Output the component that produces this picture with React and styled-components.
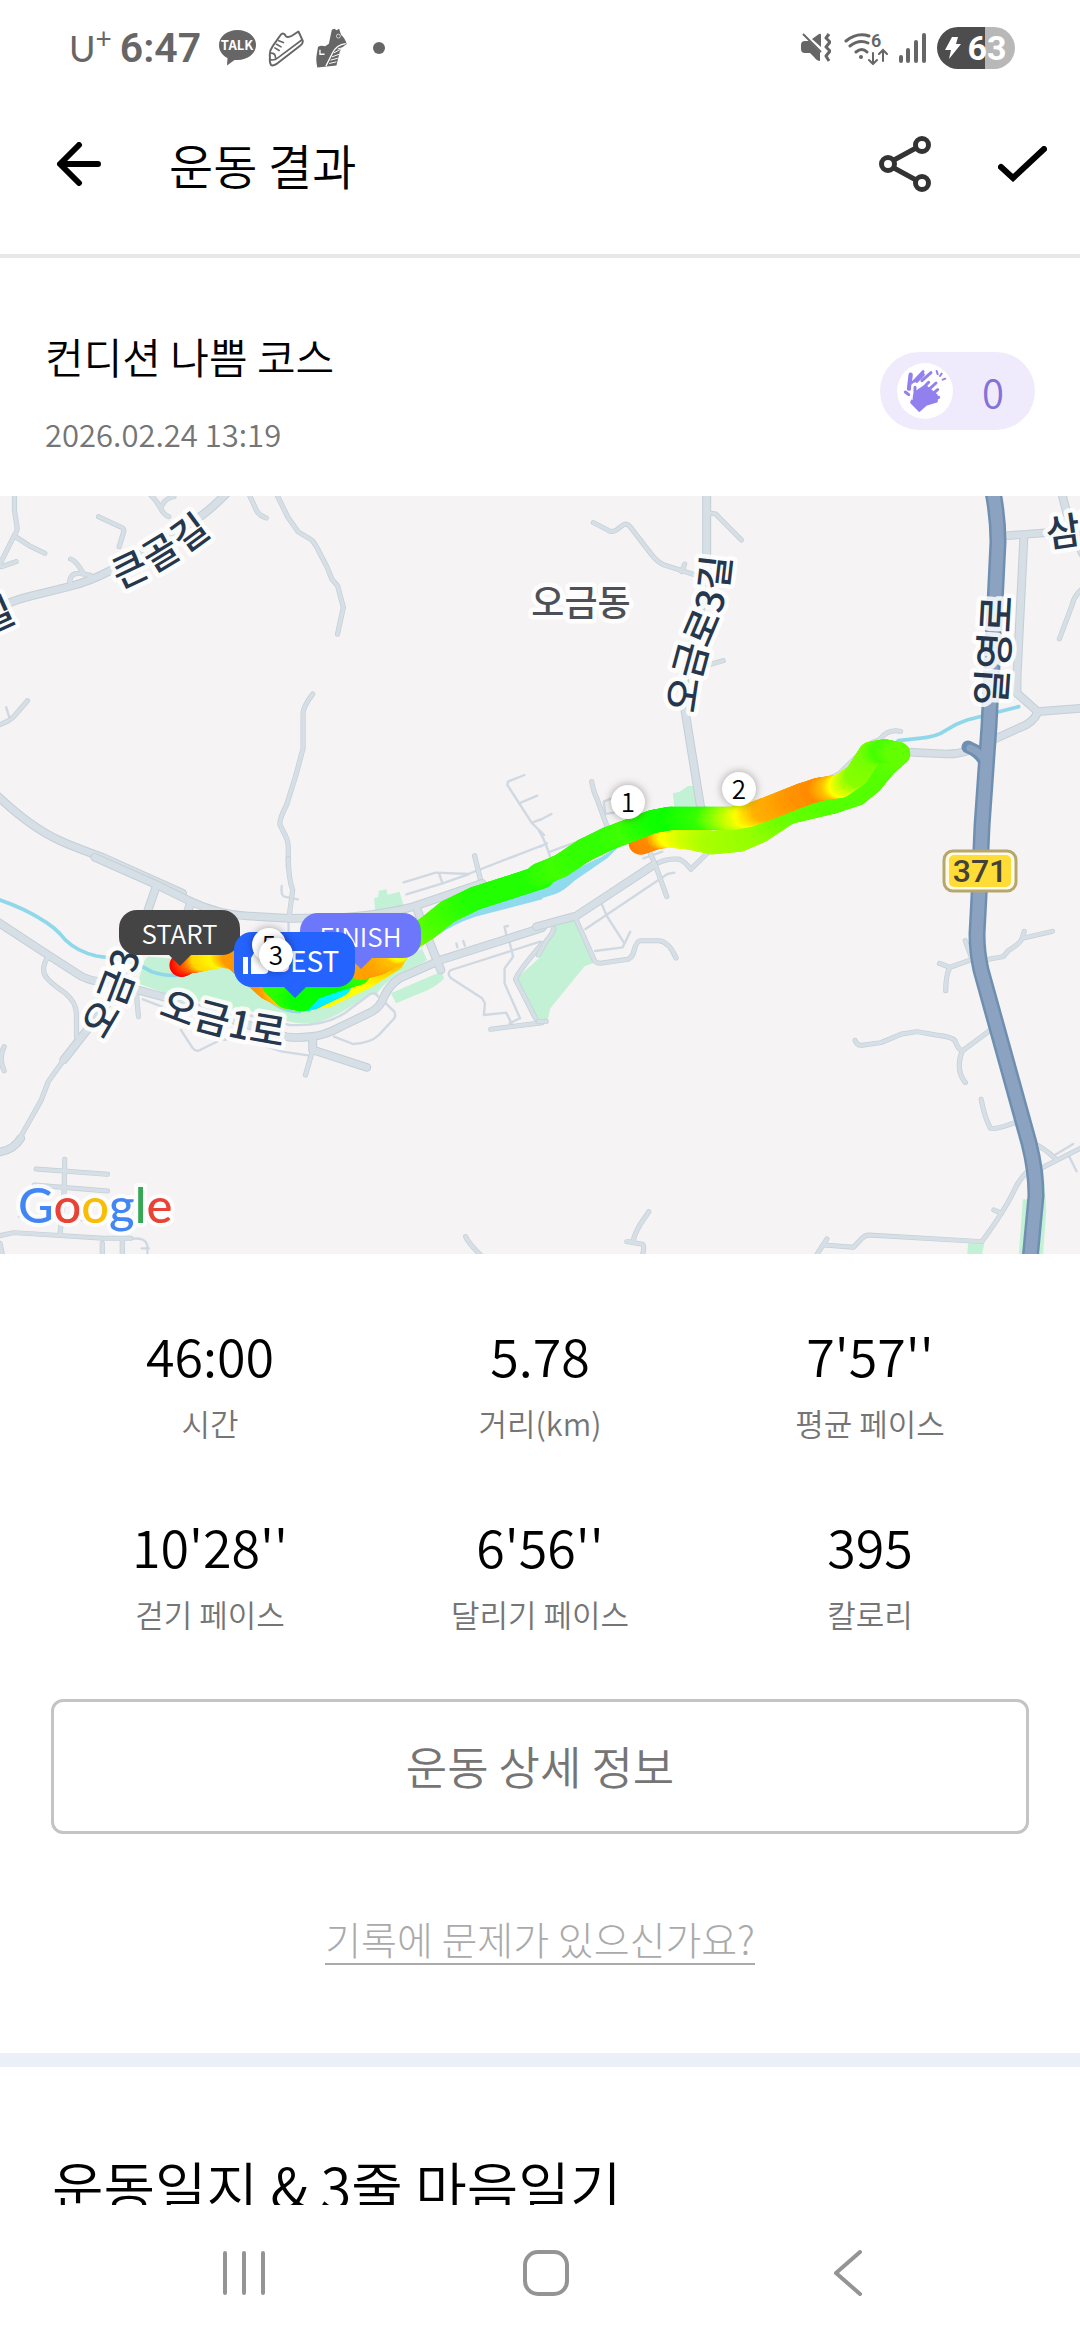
import React from 'react';
import styled, { createGlobalStyle } from 'styled-components';

const GlobalStyle = createGlobalStyle`
  * {
    box-sizing: border-box;
  }
  body {
    margin: 0;
    background: #ffffff;
    color: #000000;
    font-family: 'Noto Sans CJK KR', 'Noto Sans', sans-serif;
    font-weight: 350;
  }
  button {
    border: 0;
    padding: 0;
    background: none;
    font: inherit;
    color: inherit;
    cursor: pointer;
  }
`;

const Screen = styled.div`
  display: flex;
  flex-direction: column;
  height: 100vh;
  overflow: hidden;
`;

/* status bar */
const StatusBar = styled.div`
  display: flex;
  flex: none;
  align-items: center;
  justify-content: space-between;
  height: 96px;
  padding: 0 65px 0 69px;
  color: #666666;
  font-family: Roboto, sans-serif;
`;

const StatusGroup = styled.div`
  display: flex;
  align-items: center;
  gap: ${({ $gap }) => $gap}px;
`;

const Carrier = styled.span`
  margin-right: -4px;
  font-family: Lato, sans-serif;
  font-size: 36px;
  font-weight: 400;
  line-height: 48px;

  sup {
    font-size: 28px;
    line-height: 1;
  }
`;

const Clock = styled.span`
  margin-right: 6px;
  font-size: 41px;
  font-weight: 600;
  line-height: 48px;
`;

const Dot = styled.i`
  width: 12px;
  height: 12px;
  margin-left: 14px;
  border-radius: 50%;
  background: #666666;
`;

const Battery = styled.div`
  display: flex;
  align-items: center;
  justify-content: center;
  gap: 6px;
  width: 78px;
  height: 42px;
  border-radius: 21px;
  background: linear-gradient(90deg, #4d4d4d 62%, #b8b8b8 62%);
  color: #ffffff;
  font-size: 34px;
  font-weight: 700;
  line-height: 42px;
`;

/* header */
const Header = styled.header`
  display: flex;
  flex: none;
  align-items: center;
  height: 162px;
  padding: 0 33px 22px 57px;
  border-bottom: 4px solid #e8e8e8;
`;

const HeaderTitle = styled.h1`
  flex: 1;
  margin: 0 0 0 68px;
  font-size: 48px;
  font-weight: 350;
  line-height: 62px;
`;

const IconButton = styled.button`
  display: flex;
  align-items: center;
  justify-content: center;
`;

const HeaderActions = styled.div`
  display: flex;
  gap: 67px;
`;

const Content = styled.main`
  flex: 1;
  min-height: 0;
  overflow-y: auto;
  scrollbar-width: none;
`;

/* course */
const Course = styled.section`
  display: flex;
  align-items: center;
  justify-content: space-between;
  padding: 68px 45px 40px;
`;

const CourseName = styled.h2`
  margin: 0 0 26px;
  font-size: 42px;
  font-weight: 350;
  line-height: 60px;
`;

const CourseDate = styled.div`
  color: #757575;
  font-size: 31px;
  line-height: 44px;
`;

const ClapButton = styled.button`
  display: flex;
  align-items: center;
  gap: 29px;
  height: 78px;
  padding: 0 31px 0 17px;
  border-radius: 39px;
  background: #efebfc;
  color: #8572d8;
  font-size: 40px;
  line-height: 60px;
`;

const ClapCircle = styled.span`
  width: 56px;
  height: 56px;
  border-radius: 50%;
  background: #ffffff;

  svg {
    display: block;
  }
`;

/* map */
const MapBox = styled.section`
  position: relative;
  aspect-ratio: 1080 / 758;
  overflow: hidden;
  background: #f5f3f4;
`;

const MapSvg = styled.svg`
  display: block;
  width: 100%;
  height: 100%;
`;

const Pin = styled.div`
  position: absolute;
  left: ${({ $x }) => ($x / 1080) * 100}%;
  top: ${({ $y }) => ($y / 758) * 100}%;
  display: flex;
  align-items: center;
  justify-content: center;
  width: 121px;
  height: 45px;
  border-radius: 18px;
  background: ${({ $color }) => $color};
  color: #ffffff;
  font-size: 26px;
  line-height: 40px;

  &::after {
    content: '';
    position: absolute;
    top: 100%;
    left: 50%;
    margin: -1px 0 0 -12px;
    border: 12px solid transparent;
    border-top-color: ${({ $color }) => $color};
    border-bottom: 0;
  }
`;

const BestPin = styled(Pin)`
  height: 55px;
  padding-right: 8px;
  font-size: 28px;
  font-weight: 400;
`;

const KmPin = styled.div`
  position: absolute;
  left: ${({ $x }) => ($x / 1080) * 100}%;
  top: ${({ $y }) => ($y / 758) * 100}%;
  width: 34px;
  height: 34px;
  margin: -17px 0 0 -17px;
  border-radius: 50%;
  background: #ffffff;
  box-shadow: 0 0 8px rgba(0, 0, 0, 0.35);
  font-size: 26px;
  line-height: 32px;
  text-align: center;
`;

/* record */
const Record = styled.section`
  display: flex;
  flex-direction: column;
  align-items: center;
  padding: 63px 45px 88px;
`;

const Stats = styled.dl`
  display: grid;
  grid-template-columns: repeat(3, 1fr);
  row-gap: 63px;
  width: 100%;
  margin: 0 0 63px;
`;

const Stat = styled.div`
  display: flex;
  flex-direction: column-reverse;
  gap: 8px;
  text-align: center;
`;

const StatValue = styled.dd`
  margin: 0;
  font-size: 52px;
  line-height: 76px;
`;

const StatLabel = styled.dt`
  color: #757575;
  font-size: 31px;
  line-height: 44px;
`;

const DetailWrap = styled.div`
  width: 100%;
  padding: 0 6px;
`;

const DetailButton = styled.button`
  width: 100%;
  height: 135px;
  padding-bottom: 3px;
  border: 3px solid #c4c4c4;
  border-radius: 12px;
  color: #757575;
  font-size: 45px;
`;

const ReportLink = styled.a`
  margin-top: 79px;
  border-bottom: 2px solid #aaaaaa;
  color: #aaaaaa;
  font-size: 39px;
  font-weight: 300;
  line-height: 50px;
  text-decoration: none;
`;

const Diary = styled.section`
  padding: 78px 52px;
  border-top: 14px solid #ebeff8;
`;

const DiaryTitle = styled.h2`
  margin: 0;
  font-size: 56px;
  font-weight: 350;
  line-height: 80px;
`;

const NavBar = styled.nav`
  display: grid;
  flex: none;
  grid-template-columns: repeat(3, 1fr);
  height: 135px;
  padding: 0 81px 0 93px;
  background: #ffffff;
`;

const stats = [
  { label: '시간', value: '46:00' },
  { label: '거리(km)', value: '5.78' },
  { label: '평균 페이스', value: "7'57''" },
  { label: '걷기 페이스', value: "10'28''" },
  { label: '달리기 페이스', value: "6'56''" },
  { label: '칼로리', value: '395' },
];

// 지도는 4개의 타일로 나눠 그린다. 좌표는 타일 기준
const tiles = [
  {
    at: 'translate(0 -6) scale(.3444 .3333)',
    green: [],
    water: [],
    wide: [
      'M660 8 Q610 60 578 82 L400 200 Q360 225 320 242 Q260 275 200 290 L90 318 Q50 328 20 342 L-10 352',
      'M-5 920 Q90 1012 170 1050 Q200 1065 300 1103 L530 1210',
    ],
    mid: [
      'M42 10 L42 60 L50 115 Q50 125 42 135 L0 222',
      'M45 140 L85 167 L130 190',
      'M5 230 L47 215',
      'M205 207 Q222 213 242 250',
      'M203 280 Q200 250 230 250 L262 256',
      'M286 80 L355 113 Q362 118 358 130 L346 170',
      'M435 12 Q455 32 465 52 Q475 75 490 80',
      'M468 50 Q480 25 505 20',
      'M722 10 L745 62 Q752 76 773 84',
      'M802 10 L835 80 L865 125 L905 150 Q912 156 920 172 L950 232 L964 268 L980 287 L997 352 L980 433',
      'M908 612 Q880 650 880 670 L880 775 L858 860 L832 945 Q810 990 813 1005 L830 1040 Q837 1055 837 1070 L837 1130',
      'M80 632 L40 680 Q30 692 -5 706',
      'M1378 1097 L1400 1190',
    ],
    thin: [
      'M18 652 L27 682',
      'M1523 855 L1475 875 L1473 885 L1545 1000 L1580 1035',
      'M1508 940 L1560 917',
      'M1545 998 L1570 988',
      'M1172 1177 L1265 1148 L1360 1152 L1570 1068',
      'M1275 1150 L1285 1180',
      'M1180 1213 L1285 1180 L1360 1153',
    ],
  },
  {
    at: 'translate(540 -6) scale(.3444 .3333)',
    green: ['M386 910 L405 905 L430 888 L450 888 L458 950 L390 952Z'],
    water: ['M1040 752 L1100 745 Q1150 742 1180 720 Q1210 700 1240 690 L1390 650'],
    wide: [
      'M484 10 L484 250 L470 340 L420 560 L420 655 L467 955',
      'M1345 138 L1570 120',
      'M1405 140 L1385 560 L1385 610 L1445 665 L1570 655',
      'M1445 668 Q1430 700 1395 712 L1310 752',
      'M1040 785 L1180 792 Q1220 792 1245 780',
      'M1515 10 L1530 70 L1575 190',
    ],
    mid: [
      'M155 98 L200 122 Q212 128 225 118 L240 106 Q250 98 260 108 L325 195 Q340 215 360 225 L450 255',
      'M420 222 L412 245',
      'M495 70 L510 72 L585 150',
      'M480 528 L532 512',
      'M150 875 Q155 905 165 925 L195 1010',
      'M1570 300 Q1550 320 1545 345 L1508 447',
      'M1047 724 Q1010 715 985 750 Q950 760 930 790 L870 850 Q840 870 780 880',
      'M330 1125 Q370 1102 405 1108 Q420 1115 438 1138 L510 1065',
    ],
    thin: [
      'M215 922 L185 935 L190 972 L215 968',
      'M0 990 L33 972',
      'M-3 1023 Q15 1050 32 1110',
      'M0 1070 L20 1060',
      'M30 1085 L120 1050 L190 1012',
      'M300 1105 L355 1085',
    ],
  },
  {
    at: 'translate(0 364) scale(.3444 .3333)',
    green: [
      'M430 290 L560 300 L690 300 L760 380 L870 450 L1000 420 L1180 300 L1225 265 L1240 300 L1180 340 Q1130 350 1095 400 Q1080 395 1060 410 Q980 470 930 485 Q860 500 800 470 L740 455 L680 450 L480 400 L400 370 L420 300Z',
      'M1086 115 L1098 112 L1100 92 L1122 88 L1125 104 L1160 95 L1173 140 L1090 160Z',
      'M1135 400 L1280 335 L1290 355 Q1270 380 1220 400 L1150 430Z',
      'M1570 290 L1497 358 L1555 480 L1570 480Z',
    ],
    river: 'M1575 75 L1400 120 L1230 240 L1260 232 Q1320 190 1380 170 L1575 118Z',
    water: [
      'M-5 118 Q70 145 115 175 Q160 200 190 240 Q225 275 280 288 L350 298 Q400 310 440 335 Q480 350 530 345 L600 310 Q640 300 690 310',
      'M755 385 Q800 455 870 455',
    ],
    wide: [
      'M275 -8 L450 72 L555 125 Q640 165 720 168 L840 175 L1000 172 Q1130 160 1200 140 L1400 70',
      'M-5 187 L140 285 L230 345 Q260 365 330 370 L400 390 L490 415 L650 470 L720 495 L830 530 Q860 535 900 530 Q940 528 990 500 L1080 455 Q1105 440 1115 410 Q1130 375 1160 355 L1280 300 L1575 203',
      'M185 600 L400 315',
      'M60 835 Q40 870 -5 877',
      'M455 75 L430 150',
      'M555 125 L545 155',
      'M1208 140 L1245 240 L1280 330',
      'M908 535 L908 570 L1065 622',
    ],
    mid: [
      'M140 290 Q120 320 130 345 Q140 365 190 400 Q220 425 222 460 L222 530',
      'M185 600 L140 665 L120 720 L60 830',
      'M12 560 Q-5 595 12 632',
      'M188 898 L186 1000 L174 1125',
      'M105 927 L312 943',
      'M100 975 L312 993',
      'M-5 1128 L40 1118 L300 1135 L380 1135',
      'M355 1135 L355 1190',
      'M297 1150 L297 1190',
      'M0 1150 L8 1190',
      'M395 390 L402 470',
      'M837 -5 Q838 60 850 90 L840 165',
      'M908 570 L887 645',
      'M1425 508 L1575 488',
      'M1352 1130 Q1360 1150 1400 1190',
      'M1575 250 Q1500 340 1497 358 L1555 475',
    ],
    thin: [
      'M380 1137 Q425 1130 428 1160 L428 1190',
      'M412 1165 L432 1165',
      'M55 1070 L300 1085',
      'M818 78 Q815 105 825 110 L865 118',
      'M838 175 L838 225',
      'M1568 245 L1310 330 Q1295 340 1310 355 L1400 415 L1408 430 L1405 465 L1470 458 L1485 490',
      'M1478 240 L1490 290 L1465 325 L1465 370 L1510 475 L1480 490',
      'M1475 198 L1465 200 L1470 225',
      'M1325 250 L1328 262',
      'M1345 243 L1350 258',
      'M970 530 L1025 552 Q1075 550 1100 525 L1145 475 Q1150 465 1145 455 L1115 425',
      'M700 460 L840 495 Q940 500 1000 460 L1075 402 Q1090 395 1098 410',
      'M415 418 L470 440',
      'M525 510 L560 565 Q570 578 585 568 L640 540 L700 535 L820 575 L900 587',
    ],
  },
  {
    at: 'translate(540 364) scale(.3444 .3333)',
    green: [
      'M0 275 L40 200 L105 180 L155 310 L130 318 L30 445 L22 480 L0 480Z',
      'M1402 1018 L1420 1018 L1420 1190 L1390 1190Z',
      'M1440 930 L1462 930 L1470 1050 L1460 1190 L1430 1190Z',
      'M1243 1150 L1290 1150 L1282 1190 L1240 1190Z',
    ],
    river: 'M-5 80 L180 -10 L240 -50 L195 -5 L100 62 Q70 92 45 102 L-5 118Z',
    water: [],
    wide: ['M-10 200 L105 168 L330 15'],
    mid: [
      'M320 -20 L335 15 L368 110',
      'M103 175 L155 295 Q160 310 175 310 L255 298 Q268 293 272 275 Q280 242 292 242 L345 242 Q375 245 395 294',
      'M40 205 Q35 225 20 240 L-5 285',
      'M-5 485 L18 484',
      'M1235 242 L1255 298 L1190 322 L1160 310',
      'M1190 322 Q1178 345 1178 392',
      'M1290 300 L1345 290 L1360 272 Q1395 250 1400 235 L1488 214',
      'M1400 235 L1406 214',
      'M915 541 Q922 560 940 555 L990 548 L1050 522 L1095 515 L1150 525 Q1195 530 1205 542 Q1212 565 1226 573 L1308 510',
      'M1226 573 Q1205 630 1235 668',
      'M1281 718 Q1290 770 1308 805 Q1320 810 1382 787',
      'M1432 850 Q1465 865 1495 895',
      'M1445 930 L1575 862',
      'M1415 935 Q1390 960 1375 995 Q1350 1050 1283 1145 L955 1125 Q945 1125 935 1135 L910 1162 L825 1155',
      'M833 1137 L800 1190',
      'M1340 1060 L1318 1050',
      'M316 1055 L290 1095 Q270 1130 272 1145 L252 1145 L298 1153 Q305 1160 296 1190',
    ],
    thin: [
      'M390 38 L370 42 L132 207',
      'M178 130 L195 170 L245 250',
      'M262 215 L240 262 L160 273',
      'M1495 885 L1548 852',
      'M1537 890 L1558 934',
    ],
  },
];

// [x, y, 색상(hue)] - 페이스에 따라 색이 바뀐다
const trails = [
  {
    at: 'translate(540 -6) scale(.3444 .3333)',
    points: [
      [292, 1059, 30], [340, 1042, 33], [375, 1038, 58], [430, 1043, 70], [500, 1058, 80], [580, 1050, 83],
      [640, 1023, 85], [720, 968, 95], [850, 936, 100], [920, 912, 100], [960, 878, 100], [1000, 828, 100], [1040, 791, 97],
    ],
  },
  {
    at: 'translate(0 364) scale(.3444 .3333)',
    points: [
      [527, 316, 0], [545, 306, 12], [570, 302, 28], [590, 298, 50], [640, 288, 58], [680, 292, 36],
      [720, 330, 35], [780, 385, 35], [830, 411, 50], [870, 418, 60], [950, 406, 60], [1060, 351, 60], [1140, 299, 48],
    ],
  },
  {
    at: 'translate(0 364) scale(.3444 .3333)',
    points: [[890, 418, 150], [908, 413, 185], [985, 375, 182]],
  },
  {
    at: 'translate(0 364) scale(.3444 .3333)',
    points: [[796, 374, 110], [832, 410, 110], [875, 419, 118], [905, 385, 118], [990, 355, 120], [1040, 340, 110]],
  },
  {
    at: 'translate(0 364) scale(.3444 .3333)',
    points: [
      [1045, 325, 38], [1100, 310, 38], [1150, 280, 45], [1180, 245, 85], [1240, 205, 98], [1300, 155, 105],
      [1380, 115, 112], [1480, 82, 112], [1575, 50, 112],
    ],
  },
  {
    at: 'translate(540 -6) scale(.3444 .3333)',
    points: [
      [-5, 1156, 110], [60, 1128, 105], [130, 1080, 108], [200, 1045, 108], [260, 1022, 105], [330, 994, 115],
      [380, 985, 117], [480, 985, 108], [560, 985, 75], [605, 976, 58], [650, 960, 42], [760, 915, 34],
      [810, 898, 33], [850, 892, 45], [873, 888, 60], [920, 855, 88], [960, 790, 92], [1000, 783, 104], [1040, 791, 97],
    ],
  },
];

const roadLabels = [
  { id: 'keungol', d: 'M114 80 Q164 60 216 16', size: 38, text: '큰골길' },
  { id: 'ogeum3gil', d: 'M681 216 Q686 166 703 128 Q715 98 717 50', size: 38, text: '오금로3길' },
  { id: 'ilyeong', d: 'M991 210 Q996 143 999 79', size: 40, text: '일영로' },
  { id: 'ogeum3', d: 'M91 537 Q118 501 130 440', size: 38, text: '오금3' },
  { id: 'ogeum1', d: 'M163 505 Q206 525 292 538', size: 38, text: '오금1로' },
  { id: 'sam', d: 'M1046 38 L1130 26', size: 38, text: '삼밭' },
  { id: 'gil', d: 'M-20 126 L40 99', size: 38, text: '길' },
];

function Trail({ at, points }) {
  const dots = [];
  points.slice(1).forEach(([x, y, hue], i) => {
    const [px, py, pHue] = points[i];
    const steps = Math.ceil(Math.hypot(x - px, y - py) / 4);
    for (let s = 0; s <= steps; s++) {
      const t = s / steps;
      dots.push([px + (x - px) * t, py + (y - py) * t, Math.round(pHue + (hue - pHue) * t)]);
    }
  });
  return (
    <g transform={at}>
      {dots.map(([x, y, hue], i) => (
        <circle key={i} cx={x} cy={y} r="35" fill={`hsl(${hue} 100% 50%)`} />
      ))}
    </g>
  );
}

function Lines({ list, color, width }) {
  return list.map((d) => (
    <path key={d} d={d} fill="none" stroke={color} strokeWidth={width} strokeLinecap="round" strokeLinejoin="round" />
  ));
}

function CourseMap() {
  return (
    <MapBox>
      <MapSvg viewBox="0 0 1080 758">
        {tiles.map((tile) => (
          <g key={tile.at} transform={tile.at}>
            {tile.green.map((d) => <path key={d} d={d} fill="#c3f1d5" />)}
            {tile.river && <path d={tile.river} fill="#8fdaec" />}
            <Lines list={tile.water} color="#8fd8ea" width={11} />
            <Lines list={tile.thin} color="#d0d9e2" width={7} />
            <Lines list={tile.mid} color="#c4cfd6" width={15} />
            <Lines list={tile.wide} color="#c4cfd6" width={26} />
            <Lines list={tile.mid} color="#d6dfe5" width={11} />
            <Lines list={tile.wide} color="#d6dfe5" width={20} />
          </g>
        ))}
        <g fill="none" strokeLinecap="round">
          <path d="M968 251 Q981 256 986 268" stroke="#6f8fb0" strokeWidth="13" />
          <path
            d="M993 -4 Q998 22 998 46 L989 230 L982 330 L979 400 L977 438 Q977 456 981 474 L1029 647 Q1036 674 1036 700 L1030 764"
            stroke="#6f8fb0"
            strokeWidth="17"
          />
          <path
            d="M993 -4 Q998 22 998 46 L989 230 L982 330 L979 400 L977 438 Q977 456 981 474 L1029 647 Q1036 674 1036 700 L1030 764"
            stroke="#8ba3c1"
            strokeWidth="12"
          />
          <path d="M970 252 Q981 256 986 268" stroke="#8ba3c1" strokeWidth="7" />
        </g>
        {trails.map((trail, i) => <Trail key={i} {...trail} />)}

        <g
          fontFamily="'Noto Sans CJK KR', sans-serif"
          fontWeight="500"
          fill="#26374d"
          stroke="#ffffff"
          strokeOpacity=".85"
          strokeWidth="9"
          strokeLinejoin="round"
          paintOrder="stroke"
        >
          {roadLabels.map(({ id, d, size, text }) => (
            <g key={id}>
              <path id={id} d={d} fill="none" stroke="none" />
              <text dy="14" fontSize={size}><textPath href={`#${id}`}>{text}</textPath></text>
            </g>
          ))}
          <text x="581" y="120" fontSize="36" fill="#4d5157" textAnchor="middle">오금동</text>
        </g>

        <g>
          <rect x="944" y="355" width="72" height="40" rx="9" fill="#fffbe8" stroke="#b7a76c" strokeWidth="3" />
          <rect x="949" y="359" width="62" height="32" rx="5" fill="#ffdc36" />
          <text x="980" y="386" fontFamily="Roboto, sans-serif" fontSize="32" fontWeight="500" fill="#45423a" textAnchor="middle">371</text>
        </g>

        <text
          x="18"
          y="727"
          fontFamily="Lato, sans-serif"
          fontSize="49"
          fontWeight="500"
          stroke="#ffffff"
          strokeOpacity=".8"
          strokeWidth="8"
          strokeLinejoin="round"
          paintOrder="stroke"
        >
          <tspan fill="#4285f4">G</tspan>
          <tspan fill="#ea4335">o</tspan>
          <tspan fill="#fbbc05">o</tspan>
          <tspan fill="#4285f4">g</tspan>
          <tspan fill="#34a853">l</tspan>
          <tspan fill="#ea4335">e</tspan>
        </text>
      </MapSvg>
      <Pin $x={119} $y={414} $color="#444444">START</Pin>
      <Pin $x={300} $y={417} $color="#6c77fb">FINISH</Pin>
      <BestPin $x={234} $y={436} $color="#2563ff">
        <svg width="30" height="30" viewBox="0 0 30 30" fill="#ffffff" aria-hidden="true">
          <path d="M1 12h5v17H1zM9 13l7-12q5 1 3 10h8q3 1 2 4l-3 12q-1 2-4 2H9z" />
        </svg>
        BEST
      </BestPin>
      <KmPin $x={628} $y={306}>1</KmPin>
      <KmPin $x={739} $y={293}>2</KmPin>
      <KmPin $x={269} $y={449}>5</KmPin>
      <KmPin $x={276} $y={459}>3</KmPin>
    </MapBox>
  );
}

function StatusIcons() {
  return (
    <StatusBar>
      <StatusGroup $gap={12}>
        <Carrier>U<sup>+</sup></Carrier>
        <Clock>6:47</Clock>
        <svg width="37" height="36" viewBox="0 0 37 36">
          <path d="M18.500 0C28.700 0 37 6.500 37 15S28.700 30 18.500 30l-3 0L8 35.500 8.500 28C3.400 25.400 0 21 0 15 0 6.500 8.300 0 18.500 0Z" fill="#666666" />
          <text x="18" y="20" fontFamily="'Noto Sans CJK KR', sans-serif" fontSize="13" fontWeight="700" fill="#ffffff" textAnchor="middle">TALK</text>
        </svg>
        <svg width="36" height="37" viewBox="165 28 110 112" fill="none" stroke="#666666" strokeWidth="6" strokeLinejoin="round" strokeLinecap="round">
          <path d="M171 110Q168 92 180 76L204 42Q210 34 217 42 222 54 238 45L258 32 271 60Q273 68 264 75L190 132Q180 138 174 134 169 125 171 110Z" />
          <path d="M172 118Q184 122 196 112L268 58" strokeWidth="5" />
          <path d="M198 60L212 66M191 71L205 79M186 82L199 90M174 98Q188 98 188 112" strokeWidth="5" />
        </svg>
        <svg width="31" height="40" viewBox="314 25 94 120">
          <path d="M362 30L370 27 376 31 384 27 390 45Q404 58 407 74 394 80 386 96L376 138 318 144Q313 122 316 106L320 82Q328 76 342 80L353 72Z" fill="#666666" />
          <path d="M404 72Q376 76 364 100L344 140M326 90v14h14" fill="none" stroke="#ffffff" strokeWidth="4" />
          <path d="M362 112l22-8M368 100l26-14M358 122l22-6M354 132l22-5M380 88l24-6" fill="none" stroke="#ffffff" strokeWidth="3" />
          <circle cx="382" cy="49" r="6" fill="none" stroke="#ffffff" strokeWidth="2" />
        </svg>
        <Dot />
      </StatusGroup>
      <StatusGroup $gap={11}>
        <svg width="30" height="30" viewBox="0 0 30 30" fill="#666666">
          <path d="M0 12Q0 8 4 8h4l11 11v9q-3 0-6-4l-4-4H4Q0 20 0 16ZM11 6L18 1Q20 0 20 2V14Z" />
          <path d="M2 1L20 19" stroke="#666666" strokeWidth="2" />
          <path d="M28 1l-3 4 4 4-4 5 4 4-4 5 3 5" fill="none" stroke="#666666" strokeWidth="3" strokeLinejoin="round" />
        </svg>
        <svg width="46" height="34" viewBox="-3 -2 46 34" fill="none" stroke="#666666" strokeWidth="3" strokeLinecap="round">
          <path d="M1 8Q12-1 24 3M5 13Q14 6 23 10M11 19Q17 14 22 19" />
          <circle cx="16" cy="24" r="2" fill="#666666" stroke="none" />
          <path d="M28 20v10M24 27l4 4 4-4M38 28V18M34 21l4-4 4 4" strokeWidth="2" />
          <text x="26" y="14" fontFamily="Roboto, sans-serif" fontSize="18" fontWeight="600" fill="#666666" stroke="none">6</text>
        </svg>
        <svg width="27" height="30" viewBox="0 0 27 30" stroke="#666666" strokeWidth="4" strokeLinecap="round">
          <path d="M2 24v4M9 17v11M17 9v19M25 2v26" />
        </svg>
        <Battery>
          <svg width="16" height="22" viewBox="0 0 16 22" fill="#ffffff"><path d="M7 0h6l-2 7h5L4 22l2-9H0Z" /></svg>
          63
        </Battery>
      </StatusGroup>
    </StatusBar>
  );
}

function App() {
  return (
    <Screen>
      <GlobalStyle />
      <StatusIcons />
      <Header>
        <IconButton aria-label="뒤로">
          <svg width="44" height="44" viewBox="0 0 44 44" fill="none" stroke="#000000" strokeWidth="6" strokeLinecap="round" strokeLinejoin="round">
            <path d="M41 22H4M22 3L3 22l19 19" />
          </svg>
        </IconButton>
        <HeaderTitle>운동 결과</HeaderTitle>
        <HeaderActions>
          <IconButton aria-label="공유">
            <svg width="52" height="56" viewBox="0 0 52 56" fill="none" stroke="#333333" strokeWidth="5">
              <path d="M15 24L37 12M15 32L37 44" />
              <circle cx="9" cy="28" r="6.500" />
              <circle cx="43" cy="9" r="6.500" />
              <circle cx="43" cy="47" r="6.500" />
            </svg>
          </IconButton>
          <IconButton aria-label="확인">
            <svg width="49" height="36" viewBox="0 0 49 36" fill="none" stroke="#000000" strokeWidth="6" strokeLinecap="round">
              <path d="M3 21L15 32 46 3" />
            </svg>
          </IconButton>
        </HeaderActions>
      </Header>
      <Content>
        <Course>
          <div>
            <CourseName>컨디션 나쁨 코스</CourseName>
            <CourseDate>2026.02.24 13:19</CourseDate>
          </div>
          <ClapButton>
            <ClapCircle>
              <svg width="56" height="56" viewBox="81 69 168 168" fill="none" stroke="#9180ee" strokeLinecap="round" strokeLinejoin="round">
                <path d="M122 104L117 146" strokeWidth="13" />
                <path d="M106 156L116 164M128 128L159 95M140 124L160 104M156 122L183 98" strokeWidth="9" />
                <path d="M124 187L136 158 152 146 166 138 200 166 200 184 168 194 148 212Z" fill="#9180ee" strokeWidth="7" />
                <path d="M135 168V142M154 150L176 127M166 158L198 129M178 170L203 149M186 182L206 172" strokeWidth="9" />
                <path d="M126 178V138Q130 128 138 130" stroke="#ffffff" strokeWidth="4" />
                <path d="M200 93L203 103M215 101L210 108M226 116L218 119" strokeWidth="6" />
              </svg>
            </ClapCircle>
            0
          </ClapButton>
        </Course>
        <CourseMap />
        <Record>
          <Stats>
            {stats.map(({ label, value }) => (
              <Stat key={label}>
                <StatLabel>{label}</StatLabel>
                <StatValue>{value}</StatValue>
              </Stat>
            ))}
          </Stats>
          <DetailWrap>
            <DetailButton>운동 상세 정보</DetailButton>
          </DetailWrap>
          <ReportLink href="#report">기록에 문제가 있으신가요?</ReportLink>
        </Record>
        <Diary>
          <DiaryTitle>운동일지 &amp; 3줄 마음일기</DiaryTitle>
        </Diary>
      </Content>
      {/* 하단 시스템 네비게이션 */}
      <NavBar>
        <IconButton aria-label="최근 앱">
          <svg width="42" height="46" viewBox="0 0 42 46" stroke="#949494" strokeWidth="4" strokeLinecap="round">
            <path d="M2 3v40M21 3v40M40 3v40" />
          </svg>
        </IconButton>
        <IconButton aria-label="홈">
          <svg width="46" height="46" viewBox="0 0 46 46" fill="none" stroke="#949494" strokeWidth="4">
            <rect x="2" y="2" width="42" height="42" rx="13" />
          </svg>
        </IconButton>
        <IconButton aria-label="이전">
          <svg width="28" height="46" viewBox="0 0 28 46" fill="none" stroke="#949494" strokeWidth="4" strokeLinecap="round" strokeLinejoin="round">
            <path d="M26 2L2 23l24 21" />
          </svg>
        </IconButton>
      </NavBar>
    </Screen>
  );
}

export default App;
